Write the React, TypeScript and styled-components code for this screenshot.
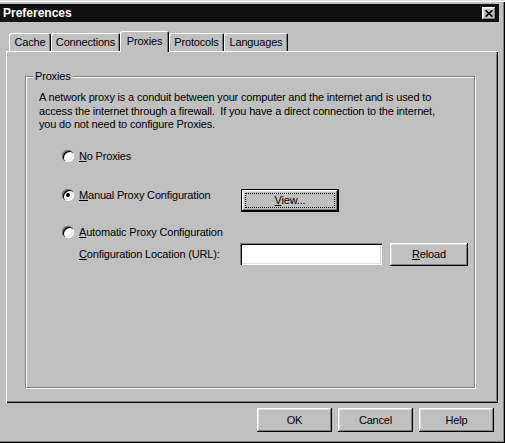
import * as React from 'react';
import styled, { createGlobalStyle } from 'styled-components';

const GlobalStyle = createGlobalStyle`
  html, body {
    margin: 0;
    padding: 0;
    background: #c0c0c0;
  }
  body {
    font-family: "Liberation Sans", Arial, sans-serif;
    font-size: 11px;
    letter-spacing: -0.17px;
    color: #000;
  }
`;

const bevel = `
  box-shadow: inset -1px -1px #000, inset 1px 1px #fff, inset -2px -2px #808080,
    inset 2px 2px #dfdfdf;
`;

const tabs = [
  { name: 'Cache', width: 42 },
  { name: 'Connections', width: 69 },
  { name: 'Proxies', width: 49 },
  { name: 'Protocols', width: 55 },
  { name: 'Languages', width: 64 }
];

const App = () => {
  const [selected, setSelected] = React.useState('manual');
  const [activeTab, setActiveTab] = React.useState('Proxies');

  return (
    <React.Fragment>
      <GlobalStyle />
      <Window>
        <TitleBar>
          <span>Preferences</span>
          <CloseButton aria-label="Close">
            <svg width="8" height="7" viewBox="0 0 8 7">
              <path
                d="M0.6 0.4 L7.4 6.6 M7.4 0.4 L0.6 6.6"
                stroke="#000"
                strokeWidth="1.6"
                fill="none"
              />
            </svg>
          </CloseButton>
        </TitleBar>

        <Body>
          <TabStrip>
            {tabs.map(tab => (
              <Tab
                key={tab.name}
                $w={tab.width}
                $active={tab.name === activeTab}
                onClick={() => setActiveTab(tab.name)}
              >
                {tab.name}
              </Tab>
            ))}
          </TabStrip>

          <Panel>
            <Group>
              <Caption>Proxies</Caption>
              <Intro>
                A network proxy is a conduit between your computer and the
                internet and is used to
                <br />
                access the internet through a firewall.{'\u00a0'} If you have a
                direct connection to the internet,
                <br />
                you do not need to configure Proxies.
              </Intro>

              <Options>
                <Row $top={18}>
                  <Choice onClick={() => setSelected('none')}>
                    <Radio $checked={selected === 'none'} />
                    <span>
                      <u>N</u>o Proxies
                    </span>
                  </Choice>
                </Row>

                <Row $top={26}>
                  <Choice $w={179} onClick={() => setSelected('manual')}>
                    <Radio $checked={selected === 'manual'} />
                    <span>
                      <u>M</u>anual Proxy Configuration
                    </span>
                  </Choice>
                  <Button $w={98} $h={23} $default>
                    <u>V</u>iew...
                  </Button>
                </Row>

                <Row $top={14}>
                  <Choice onClick={() => setSelected('auto')}>
                    <Radio $checked={selected === 'auto'} />
                    <span>
                      <u>A</u>utomatic Proxy Configuration
                    </span>
                  </Choice>
                </Row>

                <UrlRow>
                  <UrlLabel>
                    <u>C</u>onfiguration Location (URL):
                  </UrlLabel>
                  <Field type="text" />
                  <Button $w={78} $h={23}>
                    <u>R</u>eload
                  </Button>
                </UrlRow>
              </Options>
            </Group>
          </Panel>

          <ButtonRow>
            <Button $w={75} $h={24}>OK</Button>
            <Button $w={75} $h={24}>Cancel</Button>
            <Button $w={75} $h={24}>Help</Button>
          </ButtonRow>
        </Body>
      </Window>
    </React.Fragment>
  );
};

const Window = styled('div')`
  width: 505px;
  height: 443px;
  box-sizing: border-box;
  padding: 4px 6px 3px 0;
  background: #c0c0c0;
  box-shadow: inset 0 1px #dfdfdf, inset 0 2px #fff, inset -1px -1px #000,
    inset -2px -2px #808080;
  display: flex;
  flex-direction: column;
`;

const TitleBar = styled('div')`
  height: 18px;
  background: #111;
  color: #fff;
  display: flex;
  align-items: center;
  justify-content: space-between;
  padding: 0 3px 0 3px;
  font-size: 12px;
  font-weight: bold;
  letter-spacing: 0;
`;

const CloseButton = styled('div')`
  width: 14px;
  height: 13px;
  background: #c0c0c0;
  display: flex;
  align-items: center;
  justify-content: center;
  ${bevel}
`;

const Body = styled('div')`
  flex: 1;
  padding: 11px 1px 0 6px;
  display: flex;
  flex-direction: column;
`;

const TabStrip = styled('div')`
  position: relative;
  z-index: 1;
  display: flex;
  align-items: flex-end;
  height: 18px;
  padding-left: 3px;
`;

const Tab = styled('div')<{ $w: number; $active?: boolean }>`
  width: ${props => props.$w}px;
  height: ${props => (props.$active ? 21 : 18)}px;
  margin-bottom: ${props => (props.$active ? -1 : 0)}px;
  padding-bottom: ${props => (props.$active ? 2 : 0)}px;
  box-sizing: border-box;
  background: #c0c0c0;
  border-radius: 2px 2px 0 0;
  box-shadow: inset 1px 1px #fff, inset -1px 0 #000, inset -2px 0 #808080;
  display: flex;
  align-items: center;
  justify-content: center;
  cursor: default;
`;

const Panel = styled('div')`
  height: 352px;
  box-sizing: border-box;
  box-shadow: inset 1px 1px #fff, inset -1px -1px #000, inset -2px -2px #808080;
  padding: 25px 23px 15px 19px;
  display: flex;
  flex-direction: column;
`;

const Group = styled('div')`
  flex: 1;
  position: relative;
  border: 1px solid #808080;
  box-shadow: inset 1px 1px #fff, 1px 1px #fff;
  padding: 14px 12px 0 13px;
`;

const Caption = styled('span')`
  position: absolute;
  top: -7px;
  left: 7px;
  padding: 0 2px;
  line-height: 13px;
  background: #c0c0c0;
`;

const Intro = styled('p')`
  margin: 0;
  line-height: 13.5px;
  white-space: nowrap;
`;

const Options = styled('div')`
  margin-left: 23px;
  display: flex;
  flex-direction: column;
`;

const Row = styled('div')<{ $top: number }>`
  display: flex;
  align-items: flex-start;
  margin-top: ${props => props.$top}px;
`;

const Choice = styled('label')<{ $w?: number }>`
  flex: none;
  display: flex;
  align-items: center;
  height: 13px;
  line-height: 13px;
  gap: 5px;
  width: ${props => (props.$w ? `${props.$w}px` : 'auto')};
`;

const Radio = styled('span')<{ $checked?: boolean }>`
  width: 12px;
  height: 12px;
  flex: none;
  border-radius: 50%;
  background: #fff;
  box-shadow: inset 1px 1px #808080, inset 2px 2px #000, inset -1px -1px #fff,
    inset -2px -2px #dfdfdf;
  display: flex;
  align-items: center;
  justify-content: center;
  &::after {
    content: '';
    width: 4px;
    height: 4px;
    border-radius: 50%;
    background: ${props => (props.$checked ? '#000' : 'transparent')};
  }
`;

const Button = styled('button')<{ $w: number; $h: number; $default?: boolean }>`
  position: relative;
  flex: none;
  width: ${props => props.$w}px;
  height: ${props => props.$h}px;
  box-sizing: border-box;
  padding: 0;
  font: inherit;
  letter-spacing: inherit;
  color: #000;
  background: #c0c0c0;
  border: ${props => (props.$default ? '1px solid #000' : 'none')};
  ${bevel}
  &::after {
    content: '';
    display: ${props => (props.$default ? 'block' : 'none')};
    position: absolute;
    inset: 3px;
    border: 1px dotted #000;
  }
`;

const UrlRow = styled('div')`
  display: flex;
  align-items: center;
  margin-top: 4px;
  padding-left: 17px;
`;

const UrlLabel = styled('span')`
  flex: none;
  width: 161px;
  white-space: nowrap;
`;

const Field = styled('input')`
  flex: none;
  width: 142px;
  height: 22px;
  box-sizing: border-box;
  margin: 0 8px 0 0;
  border: none;
  background: #fff;
  box-shadow: inset 1px 1px #808080, inset 2px 2px #000, inset -1px -1px #fff,
    inset -2px -2px #dfdfdf;
  outline: none;
`;

const ButtonRow = styled('div')`
  display: flex;
  justify-content: flex-end;
  gap: 6px;
  margin-top: 5px;
  padding-right: 4px;
`;

export default App;
